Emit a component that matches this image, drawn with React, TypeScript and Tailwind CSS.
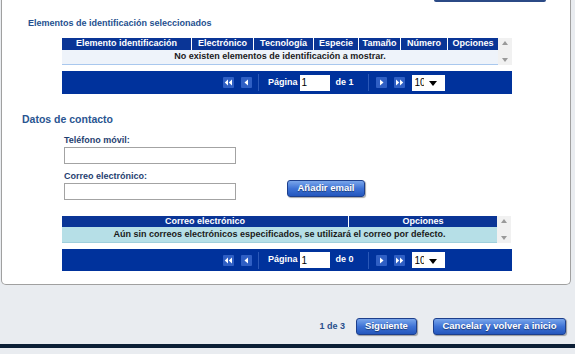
import type { ReactNode } from 'react';

const font = { fontFamily: '"Liberation Sans", Arial, sans-serif' };

function PagerIcon({ kind }: { kind: 'first' | 'prev' | 'next' | 'last' }) {
  const left = kind === 'first' || kind === 'prev';
  const double = kind === 'first' || kind === 'last';
  return (
    <span className="flex h-[11px] w-[11px] items-center justify-center rounded-[1px] bg-[#2f5fc4]">
      <svg width="9" height="7" viewBox="0 0 9 7">
        {double ? (
          left ? (
            <>
              <path d="M4 0.5 L0.8 3.5 L4 6.5 Z" fill="#fff" />
              <path d="M8 0.5 L4.8 3.5 L8 6.5 Z" fill="#fff" />
            </>
          ) : (
            <>
              <path d="M1 0.5 L4.2 3.5 L1 6.5 Z" fill="#fff" />
              <path d="M5 0.5 L8.2 3.5 L5 6.5 Z" fill="#fff" />
            </>
          )
        ) : left ? (
          <path d="M6 0.5 L2.5 3.5 L6 6.5 Z" fill="#fff" />
        ) : (
          <path d="M3 0.5 L6.5 3.5 L3 6.5 Z" fill="#fff" />
        )}
      </svg>
    </span>
  );
}

function Pager({ total, height }: { total: number; height: string }) {
  return (
    <div className={`flex w-[450px] items-center bg-[#00329c] pl-[161px] ${height}`}>
      <PagerIcon kind="first" />
      <span className="ml-[7px]">
        <PagerIcon kind="prev" />
      </span>
      <span className="ml-[6px] h-[17px] w-px bg-[#2a58b8]" />
      <span className="ml-[9px] text-[9px] font-bold text-white">Página</span>
      <span className="ml-[2px] flex h-[16px] w-[30px] items-center bg-white pl-[2px] text-[10px] text-black">1</span>
      <span className="ml-[6px] text-[9px] font-bold text-white">de {total}</span>
      <span className="ml-[14px] h-[17px] w-px bg-[#2a58b8]" />
      <span className="ml-[7px]">
        <PagerIcon kind="next" />
      </span>
      <span className="ml-[7px]">
        <PagerIcon kind="last" />
      </span>
      <span className="ml-[7px] flex h-[16px] w-[33px] items-center bg-white pl-[3px] text-[10px] text-black">
        <span className="w-[9px] overflow-hidden whitespace-nowrap">10</span>
        <svg width="8" height="5" viewBox="0 0 8 5" className="ml-[5px] mt-[2px]">
          <path d="M0 0 L8 0 L4 5 Z" fill="#000" />
        </svg>
      </span>
    </div>
  );
}

function ScrollCol({ height }: { height: string }) {
  return (
    <div className={`flex w-[14px] flex-col items-center justify-between bg-[#f1f1f1] py-[3px] ${height}`}>
      <svg width="6" height="4" viewBox="0 0 6 4">
        <path d="M0 4 L3 0 L6 4 Z" fill="#9a9a9a" />
      </svg>
      <svg width="6" height="4" viewBox="0 0 6 4">
        <path d="M0 0 L6 0 L3 4 Z" fill="#9a9a9a" />
      </svg>
    </div>
  );
}

function HeadCell({ w, children, last }: { w: string; children: ReactNode; last?: boolean }) {
  return (
    <div className={`flex h-full items-center justify-center text-[9px] font-bold text-white ${w} ${last ? '' : 'border-r border-white'}`}>
      {children}
    </div>
  );
}

function BlueButton({ children, w }: { children: ReactNode; w: string }) {
  return (
    <button
      type="button"
      className={`flex h-[17px] items-center justify-center rounded-[3px] border border-[#1d3f8c] bg-gradient-to-b from-[#7aa6ea] via-[#3f73d6] to-[#2457bd] text-[9.5px] font-bold text-white shadow-[1px_1px_1px_rgba(0,0,0,0.35)] [text-shadow:0_1px_1px_rgba(0,0,0,0.45)] ${w}`}
    >
      {children}
    </button>
  );
}

function TextInput() {
  return <div className="h-[17px] w-[172px] border border-[#a3a3a3] bg-white" />;
}

export default function App() {
  return (
    <div className="flex h-[354px] w-[575px] flex-col overflow-hidden bg-[#e9ecf0]" style={font}>
      <div className="ml-[1px] flex h-[285px] w-[570px] flex-col rounded-b-[5px] border-x border-b border-[#a0a0a0] bg-white">
        <div className="flex justify-end pr-[24px]">
          <div className="h-[2px] w-[112px] rounded-b-[2px] bg-[#2b4a86]" />
        </div>

        <div className="ml-[26px] mt-[15px] h-[12px] text-[9px] font-bold leading-[12px] text-[#25508f]">
          Elementos de identificación seleccionados
        </div>

        <div className="ml-[60px] mt-[9px] flex">
          <div className="w-[436px]">
            <div className="flex h-[12px] bg-[#0a3596]">
              <HeadCell w="w-[130px]">Elemento identificación</HeadCell>
              <HeadCell w="w-[62px]">Electrónico</HeadCell>
              <HeadCell w="w-[60px]">Tecnología</HeadCell>
              <HeadCell w="w-[45px]">Especie</HeadCell>
              <HeadCell w="w-[42px]">Tamaño</HeadCell>
              <HeadCell w="w-[47px]">Número</HeadCell>
              <HeadCell w="w-[50px]" last>
                Opciones
              </HeadCell>
            </div>
            <div className="flex h-[15px] items-center justify-center border-b border-[#a9c8ee] bg-[#eef3fa] text-[9px] font-bold text-[#1a1a1a]">
              No existen elementos de identificación a mostrar.
            </div>
          </div>
          <ScrollCol height="h-[27px]" />
        </div>

        <div className="ml-[60px] mt-[6px]">
          <Pager total={1} height="h-[23px]" />
        </div>

        <div className="ml-[20px] mt-[18px] h-[14px] text-[10.5px] font-bold leading-[14px] text-[#2a5591]">
          Datos de contacto
        </div>

        <div className="ml-[62px] mt-[9px] h-[11px] text-[9px] font-bold leading-[11px] text-[#1f3e70]">
          Teléfono móvil:
        </div>
        <div className="ml-[62px] mt-px">
          <TextInput />
        </div>

        <div className="ml-[62px] mt-[7px] h-[11px] text-[9px] font-bold leading-[11px] text-[#1f3e70]">
          Correo electrónico:
        </div>
        <div className="ml-[62px] mt-px flex items-start">
          <TextInput />
          <div className="-mt-[3px] ml-[51px]">
            <BlueButton w="w-[78px]">Añadir email</BlueButton>
          </div>
        </div>

        <div className="ml-[60px] mt-[16px] flex">
          <div className="w-[435px]">
            <div className="flex h-[11px] bg-[#0a3596]">
              <HeadCell w="w-[287px]">Correo electrónico</HeadCell>
              <HeadCell w="w-[148px]" last>
                Opciones
              </HeadCell>
            </div>
            <div className="flex h-[16px] items-center justify-center border-b border-[#9fcfdc] bg-[#b6dfe7] text-[9px] font-bold text-[#1a1a1a]">
              Aún sin correos electrónicos especificados, se utilizará el correo por defecto.
            </div>
          </div>
          <ScrollCol height="h-[27px]" />
        </div>

        <div className="ml-[60px] mt-[6px]">
          <Pager total={0} height="h-[22px]" />
        </div>
      </div>

      <div className="mt-[33px] flex items-center justify-end pr-[9px]">
        <span className="text-[9px] font-bold text-[#2a4f8c]">1 de 3</span>
        <div className="ml-[11px]">
          <BlueButton w="w-[61px]">Siguiente</BlueButton>
        </div>
        <div className="ml-[16px]">
          <BlueButton w="w-[133px]">Cancelar y volver a inicio</BlueButton>
        </div>
      </div>

      <div className="mt-[9px] h-[4px] w-full bg-[#0c1f36]" />
    </div>
  );
}
